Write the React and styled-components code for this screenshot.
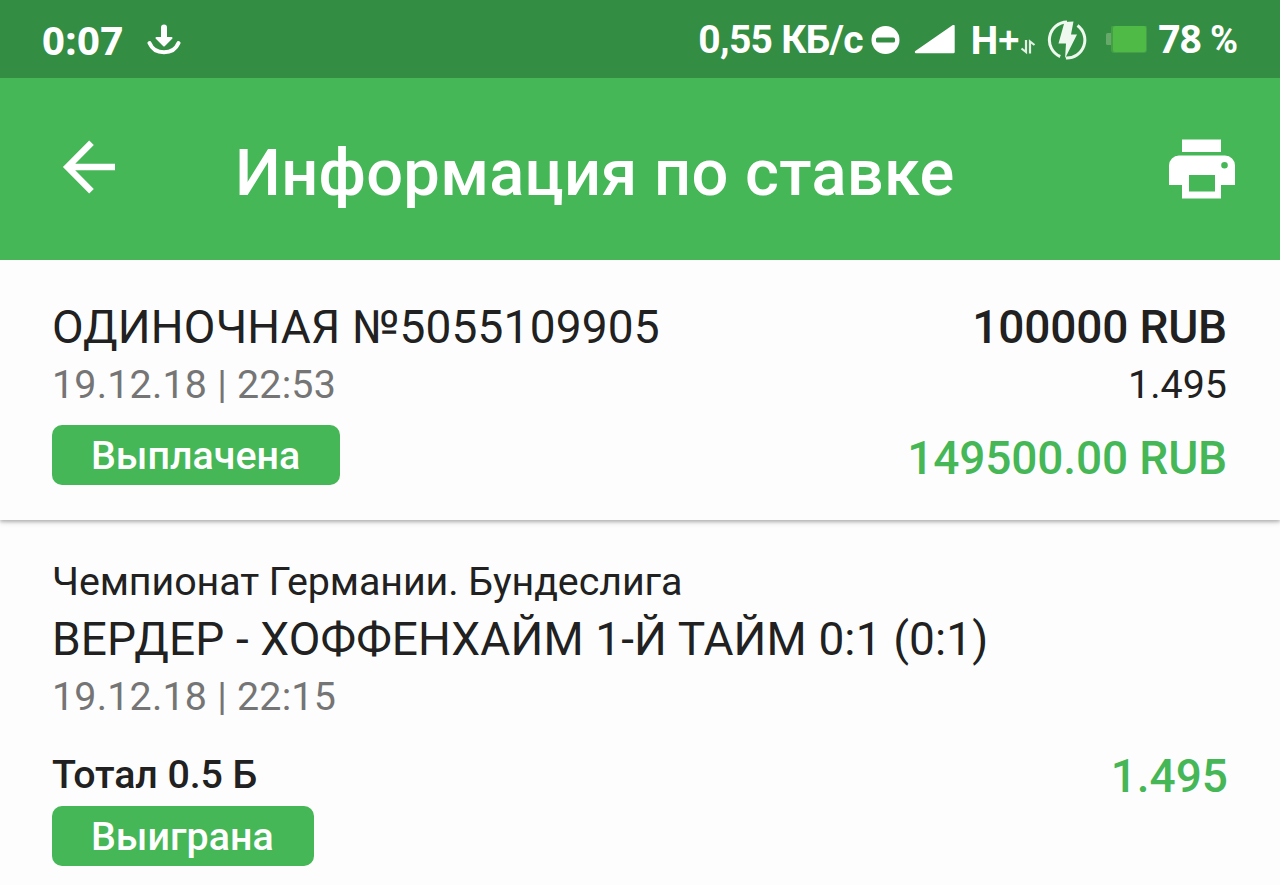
import React from "react";
import styled, { createGlobalStyle } from "styled-components";

const GlobalStyle = createGlobalStyle`
  *, *::before, *::after { box-sizing: border-box; }
  html, body { margin: 0; background: #fdfdfd; }
  body { font-family: Roboto, "Noto Sans", sans-serif; color: #212121; }
  svg { display: block; flex: none; }
`;

const Screen = styled.div`
  width: 1280px;
  height: 885px;
  overflow: hidden;
  display: flex;
  flex-direction: column;
  background: #fdfdfd;
`;

const StatusBar = styled.header`
  height: 78px;
  flex: none;
  display: flex;
  align-items: center;
  padding: 2px 42px 0;
  background: #338d42;
  color: #fff;
`;

const StatusText = styled.span`
  font-family: ${(p) => p.$family || "Roboto"}, sans-serif;
  font-size: ${(p) => p.$size || 39}px;
  font-weight: ${(p) => p.$weight || 700};
  letter-spacing: ${(p) => p.$track || 0}px;
  line-height: ${(p) => p.$height || 76}px;
  padding-bottom: ${(p) => (p.$height ? 76 - p.$height : 0)}px;
  white-space: nowrap;
`;

const PercentSign = styled.span`
  margin-left: -1px;
  font-family: Roboto, sans-serif;
  font-size: 38px;
  font-weight: 700;
  letter-spacing: 0;
`;

const StatusGroup = styled.div`
  display: flex;
  align-items: center;
  margin-left: ${(p) => (p.$end ? "auto" : "0")};
`;

const StatusIcon = styled.svg`
  margin-left: ${(p) => p.$before || 0}px;
  margin-right: ${(p) => p.$after || 0}px;
`;

const AppBar = styled.div`
  position: relative;
  z-index: 1;
  height: 182px;
  flex: none;
  display: flex;
  align-items: flex-start;
  padding: 60px 45px 0 62px;
  background: #45b757;
  color: #fff;
`;

const IconButton = styled.button`
  border: 0;
  padding: 0;
  margin-top: ${(p) => p.$top}px;
  background: none;
  color: inherit;
`;

const Title = styled.h1`
  flex: 1;
  margin: 0 0 0 119px;
  font-size: 65px;
  font-weight: 500;
  line-height: 70px;
  letter-spacing: 0.28px;
  white-space: nowrap;
`;

const Card = styled.section`
  position: relative;
  height: 260px;
  flex: none;
  display: flex;
  justify-content: space-between;
  padding: 40px 53px 0 52px;
  background: #fdfdfd;
  box-shadow: 0 2px 3px rgba(0, 0, 0, 0.18), 0 2px 6px rgba(0, 0, 0, 0.16);
`;

const Column = styled.div`
  display: flex;
  flex-direction: column;
  align-items: ${(p) => (p.$end ? "flex-end" : "flex-start")};
`;

const Line = styled.div`
  font-size: ${(p) => (p.$large ? 46 : 39.4)}px;
  font-weight: ${(p) => (p.$strong ? 500 : 400)};
  line-height: ${(p) => p.$height}px;
  letter-spacing: ${(p) => p.$track || 0}px;
  color: ${(p) => ({ muted: "#757575", accent: "#45b757" })[p.$tone] || "#212121"};
  white-space: nowrap;
`;

const Badge = styled.div`
  height: 60px;
  margin-top: ${(p) => p.$top || 0}px;
  padding: 0 40px 0 39px;
  border-radius: 10px;
  background: #45b757;
  color: #fff;
  font-size: 39.4px;
  font-weight: 500;
  line-height: 61px;
  white-space: nowrap;
`;

const Details = styled.section`
  padding: 34.5px 52px 0;
`;

const Outcome = styled.div`
  display: flex;
  justify-content: space-between;
  margin-top: 20px;
`;

function DownloadIcon() {
  return (
    <StatusIcon $before={24} width="34" height="32" viewBox="0 0 34 32" fill="none">
      <path d="M17 3.500v12" stroke="#fff" strokeWidth="6" strokeLinecap="round" />
      <path d="M9.500 14h15l-7.500 7.500z" fill="#fff" stroke="#fff" strokeWidth="2" strokeLinejoin="round" />
      <path d="M2.500 19C5 25 10 28.300 17 28.300S29 25 31.500 19" stroke="#fff" strokeWidth="4" strokeLinecap="round" />
    </StatusIcon>
  );
}

function DoNotDisturbIcon() {
  return (
    <StatusIcon $before={8} width="29" height="29" viewBox="0 0 29 29">
      <circle cx="14.500" cy="14" r="14" fill="#fff" />
      <rect x="5" y="11.500" width="19" height="5" rx="1.500" fill="#338d42" />
    </StatusIcon>
  );
}

function SignalIcon() {
  return (
    <StatusIcon $before={14} $after={14} width="42" height="30" viewBox="0 0 42 30">
      <path d="M39.500 1v26H2z" fill="#fff" stroke="#fff" strokeWidth="2.400" strokeLinejoin="round" />
    </StatusIcon>
  );
}

function DataArrowsIcon() {
  return (
    <StatusIcon $before={2} width="16" height="30" viewBox="0 0 16 30" fill="none" stroke="#e3f1e5" strokeWidth="2.200">
      <path d="M6 15v12L1.500 23.500M10 28.500V16.500l4.500 3.500" />
    </StatusIcon>
  );
}

function ChargeIcon() {
  return (
    <StatusIcon $before={11} width="40" height="40" viewBox="0 0 40 40" fill="none">
      <path d="M13.200 36.500A18 18 0 0 1 20 2M30.500 5.500A18 18 0 0 1 19 38" stroke="#eef8ee" strokeWidth="3" />
      <path d="M17.500 2L26.500 1.500L24 14.500h6L18 38.500l1-15h-7.500z" fill="#eef8ee" />
    </StatusIcon>
  );
}

function BatteryIcon() {
  return (
    <StatusIcon $before={19} $after={11} width="41" height="28" viewBox="0 0 41 28">
      <rect x="0" y="7" width="8" height="12" rx="1.500" fill="#66a96b" />
      <rect x="5" y="-1" width="36" height="28" rx="3" fill="#459f47" />
      <rect x="7" y="0" width="33" height="26" rx="2" fill="#4fba46" />
    </StatusIcon>
  );
}

function BackIcon() {
  return (
    <svg width="54" height="54" viewBox="0 0 54 54" fill="none" stroke="#fff" strokeWidth="6.500">
      <path d="M53 27H5M29.500 2.800L5.500 27l24 24.200" />
    </svg>
  );
}

function PrintIcon() {
  return (
    <svg width="66" height="60" viewBox="0 0 66 60">
      <rect x="13" y="0.500" width="39" height="12.500" fill="#fff" />
      <path
        fill="#fff"
        fillRule="evenodd"
        d="M10 16.500h46a10 10 0 0 1 10 10V46H52v13.500H13V46H0V26.500a10 10 0 0 1 10-10zM20 36v16.500h26V36zM55.500 23a3.300 3.300 0 1 0 0 6.600a3.300 3.300 0 0 0 0-6.600z"
      />
    </svg>
  );
}

export default function App() {
  return (
    <>
      <GlobalStyle />
      <Screen>
        <StatusBar>
          <StatusGroup>
            <StatusText $family='"Noto Sans"' $size={40} $track={0.4} $height={75}>0:07</StatusText>
            <DownloadIcon />
          </StatusGroup>
          <StatusGroup $end>
            <StatusText $track={-0.7}>0,55 КБ/с</StatusText>
            <DoNotDisturbIcon />
            <SignalIcon />
            <StatusText $family='"Noto Sans"' $size={38.5} $track={-1.5} $height={74}>H+</StatusText>
            <DataArrowsIcon />
            <ChargeIcon />
            <BatteryIcon />
            <StatusText $family='"Noto Sans"' $size={38.5} $track={-0.5} $height={75}>
              78 <PercentSign>%</PercentSign>
            </StatusText>
          </StatusGroup>
        </StatusBar>
        <AppBar>
          <IconButton $top={2} aria-label="Назад"><BackIcon /></IconButton>
          <Title>Информация по ставке</Title>
          <IconButton $top={1} aria-label="Печать"><PrintIcon /></IconButton>
        </AppBar>
        <Card>
          <Column>
            <Line $large $height={54} $track={0.18}>ОДИНОЧНАЯ №5055109905</Line>
            <Line $height={61} $tone="muted" $track={0.2}>19.12.18 | 22:53</Line>
            <Badge $top={10}>Выплачена</Badge>
          </Column>
          <Column $end>
            <Line $large $strong $height={54} $track={-0.16}>100000 RUB</Line>
            <Line $height={61}>1.495</Line>
            <Line $large $strong $height={86} $tone="accent" $track={-0.14}>149500.00 RUB</Line>
          </Column>
        </Card>
        <Details>
          <Line $height={54} $track={-0.08}>Чемпионат Германии. Бундеслига</Line>
          <Line $large $height={61} $track={0.13}>ВЕРДЕР - ХОФФЕНХАЙМ 1-Й ТАЙМ 0:1 (0:1)</Line>
          <Line $height={54} $tone="muted" $track={0.2}>19.12.18 | 22:15</Line>
          <Outcome>
            <Column>
              <Line $strong $height={62} $track={-0.1}>Тотал 0.5 Б</Line>
              <Badge>Выиграна</Badge>
            </Column>
            <Line $large $strong $height={64} $tone="accent">1.495</Line>
          </Outcome>
        </Details>
      </Screen>
    </>
  );
}
